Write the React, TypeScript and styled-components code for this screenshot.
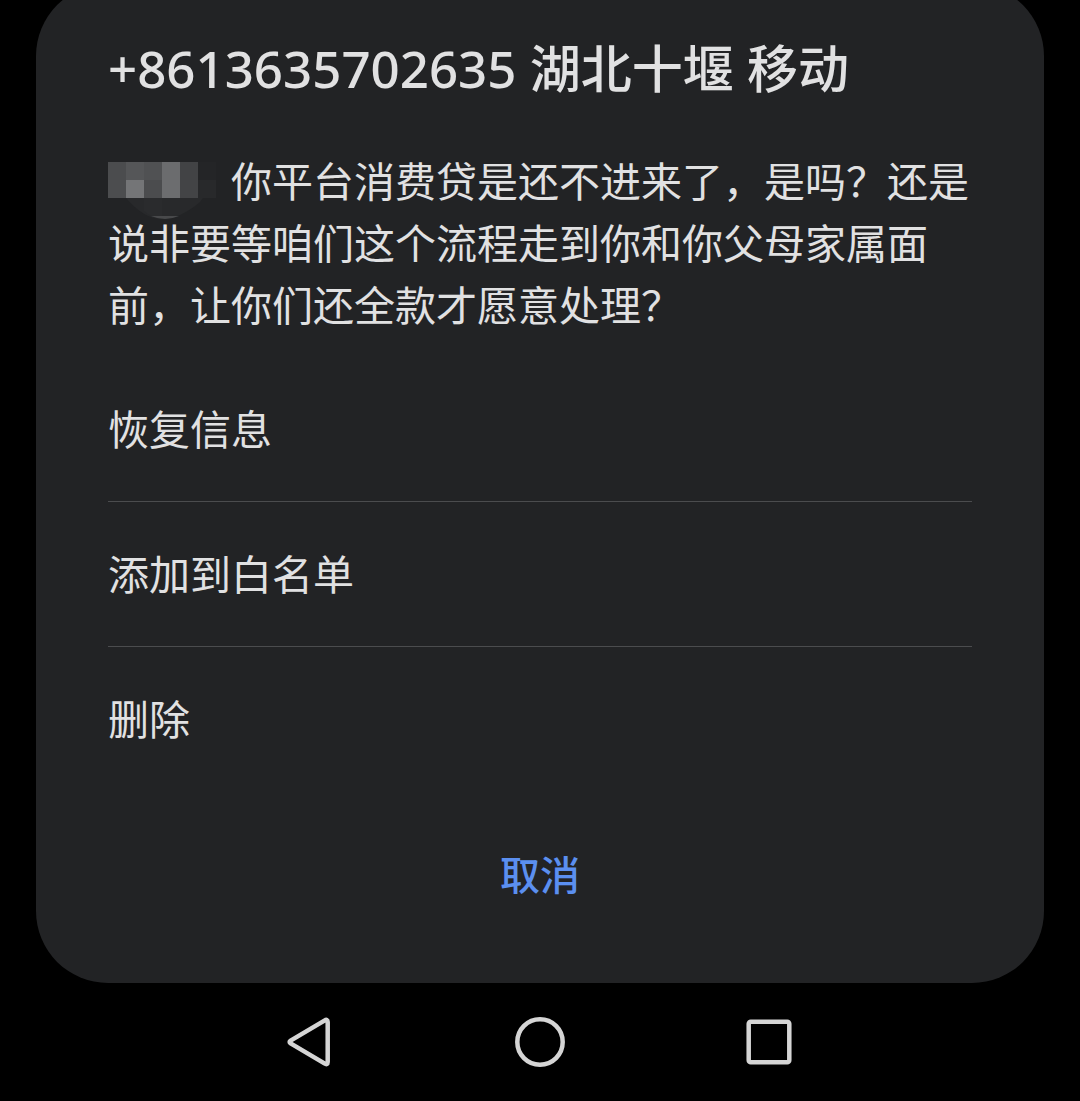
import React from "react";
import styled, { createGlobalStyle } from "styled-components";

const GlobalStyle = createGlobalStyle`
  * {
    box-sizing: border-box;
  }

  body {
    margin: 0;
    background: #000;
    color: #e1e1e2;
    font-family: "Noto Sans CJK SC", sans-serif;
  }

  button {
    font: inherit;
    color: inherit;
    background: none;
    border: 0;
    padding: 0;
    cursor: pointer;
  }
`;

const Screen = styled.div`
  display: flex;
  flex-direction: column;
  min-height: 100vh;
  overflow: hidden;
`;

const Sheet = styled.section`
  display: flex;
  flex-direction: column;
  margin: -16px 36px 0;
  padding: 34px 72px 62px;
  border-radius: 72px;
  background: #222325;
`;

const Title = styled.h1`
  margin: 0;
  font-family: "Noto Sans", "Noto Sans CJK SC", sans-serif;
  font-size: 51px;
  font-weight: 500;
  line-height: 100px;
`;

const Message = styled.p`
  margin: 30px 0 0;
  font-size: 41px;
  line-height: 62px;
`;

const Redaction = styled.svg`
  display: inline-block;
  width: 108px;
  height: 60px;
  margin-right: 15px;
  overflow: visible;
  vertical-align: top;
`;

const Actions = styled.ul`
  list-style: none;
  margin: 23px 0 0;
  padding: 0;
`;

const ActionItem = styled.li`
  & + & {
    border-top: 1px solid #4b4c4e;
  }
`;

const ActionButton = styled.button`
  display: block;
  width: 100%;
  height: 144px;
  padding-bottom: 4px;
  font-size: 41px;
  text-align: left;
`;

const CancelButton = styled.button`
  height: 96px;
  margin-top: 34px;
  color: #5b8ff0;
  font-size: 40px;
  font-weight: 500;
`;

const NavBar = styled.nav`
  display: flex;
  justify-content: center;
  gap: 157px;
  padding: 23px 0;
`;

const NavButton = styled.button`
  display: flex;
  width: 72px;
  height: 72px;
`;

const NavIcon = styled.svg`
  width: 72px;
  height: 72px;
  fill: none;
  stroke: #d5d5d5;
  stroke-width: 4.5;
  stroke-linejoin: round;
`;

const actions = ["恢复信息", "添加到白名单", "删除"];

const mosaic = [
  ["#4b4c4e", "#555658", "#505153", "#6b6c6e", "#424345", "#242527"],
  ["#4c4d4f", "#747577", "#4b4c4e", "#6c6d6f", "#434446", "#28292b"],
];

function HiddenName() {
  return (
    <Redaction viewBox="0 0 108 60" aria-hidden="true">
      <path d="M18 50Q36 71 54 71T92 54L108 32H18Z" fill="#28292b" />
      <path d="M36 50H54V71Q44 70 36 63Z" fill="#2a2b2d" />
      <path d="M43 68H71Q57 74 43 68Z" fill="#48494b" />
      {mosaic.map((row, y) =>
        row.map((fill, x) => (
          <rect key={`${x}-${y}`} x={x * 18} y={y * 18 + 14} width="18" height="18" fill={fill} />
        ))
      )}
    </Redaction>
  );
}

export default function App() {
  return (
    <>
      <GlobalStyle />
      <Screen>
        <Sheet role="dialog" aria-labelledby="sender">
          <Title id="sender">+8613635702635 湖北十堰 移动</Title>
          <Message>
            <HiddenName />
            你平台消费贷是还不进来了，是吗？还是说非要等咱们这个流程走到你和你父母家属面前，让你们还全款才愿意处理？
          </Message>
          <Actions>
            {actions.map((label) => (
              <ActionItem key={label}>
                <ActionButton type="button">{label}</ActionButton>
              </ActionItem>
            ))}
          </Actions>
          <CancelButton type="button">取消</CancelButton>
        </Sheet>
        <NavBar>
          <NavButton type="button" aria-label="返回">
            <NavIcon viewBox="0 0 72 72">
              <path d="M49.4 14.6Q52.7 12.6 52.7 16V56Q52.7 59.4 49.4 57.4L15.6 37.4Q13.6 36 15.6 34.6Z" />
            </NavIcon>
          </NavButton>
          <NavButton type="button" aria-label="主屏幕">
            <NavIcon viewBox="0 0 72 72">
              <circle cx="36" cy="36" r="22.7" />
            </NavIcon>
          </NavButton>
          <NavButton type="button" aria-label="最近任务">
            <NavIcon viewBox="0 0 72 72">
              <rect x="15.7" y="15.7" width="40.6" height="40.6" rx="2" />
            </NavIcon>
          </NavButton>
        </NavBar>
      </Screen>
    </>
  );
}
